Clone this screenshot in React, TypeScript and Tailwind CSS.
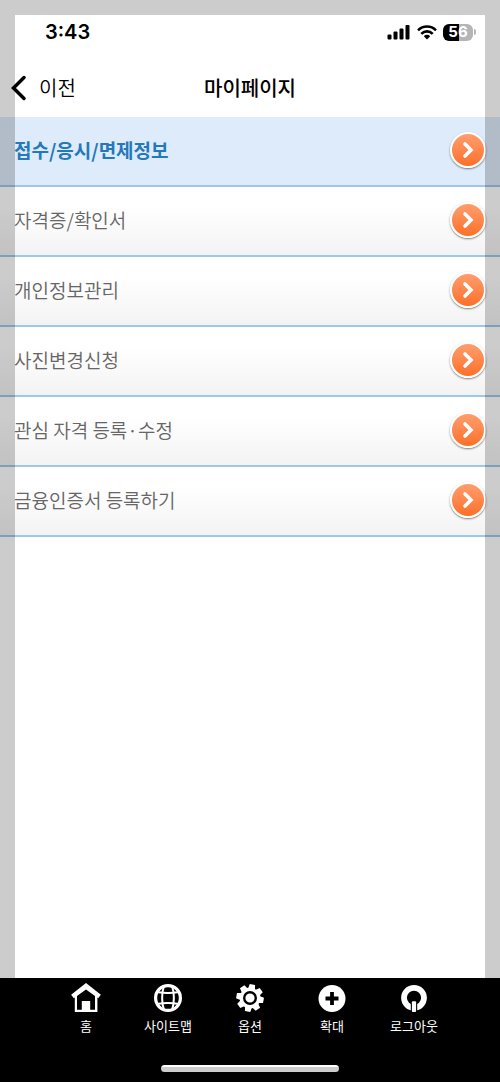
import { ReactNode } from "react";

const menuItems = [
  { label: "접수/응시/면제정보", active: true },
  { label: "자격증/확인서", active: false },
  { label: "개인정보관리", active: false },
  { label: "사진변경신청", active: false },
  { label: "관심 자격 등록·수정", active: false },
  { label: "금융인증서 등록하기", active: false },
];

const teeth = [0, 45, 90, 135, 180, 225, 270, 315];

const tabs: { label: string; icon: ReactNode }[] = [
  {
    label: "홈",
    icon: (
      <svg viewBox="0 0 30 30" className="size-[30px]" aria-hidden="true">
        <path d="M1.5 13.5 15 2.8 28.5 13.5" fill="none" stroke="white" strokeWidth="4.4" />
        <path d="M3.8 12v17h22.6V12L15 3.5Z" fill="white" />
        <path d="M6 13 15 6.4 24 13v13.7h-4.8V18h-8.4v8.7H6Z" fill="black" />
      </svg>
    ),
  },
  {
    label: "사이트맵",
    icon: (
      <svg viewBox="0 0 30 30" className="size-[30px]" fill="none" stroke="white" aria-hidden="true">
        <circle cx="15" cy="15" r="12.4" strokeWidth="3.2" />
        <path d="M11 3C8.500 10 8.500 20 11 27M19 3C21.500 10 21.500 20 19 27" strokeWidth="2" />
        <path d="M4 9q11 2 22 0M4 21q11-2 22 0" strokeWidth="2" />
      </svg>
    ),
  },
  {
    label: "옵션",
    icon: (
      <svg viewBox="0 0 30 30" className="size-[30px]" aria-hidden="true">
        <g fill="white" transform="rotate(10 15 15)">
          <circle cx="15" cy="15" r="10.4" />
          {teeth.map((angle) => (
            <path key={angle} d="M11.500 6 12.300 1.300h5.400L18.500 6Z" transform={`rotate(${angle} 15 15)`} />
          ))}
        </g>
        <circle cx="15" cy="15" r="5.8" fill="white" stroke="black" strokeWidth="2.4" />
      </svg>
    ),
  },
  {
    label: "확대",
    icon: (
      <svg viewBox="0 0 30 30" className="size-[30px]" aria-hidden="true">
        <circle cx="15" cy="15.5" r="13.5" fill="white" />
        <path d="M15 9v13M8.5 15.5h13" stroke="black" strokeWidth="3.8" />
      </svg>
    ),
  },
  {
    label: "로그아웃",
    icon: (
      <svg viewBox="0 0 30 30" className="size-[30px]" aria-hidden="true">
        <circle cx="15" cy="14.8" r="10" fill="none" stroke="white" strokeWidth="5.8" />
        <rect x="11.8" y="17.5" width="6.4" height="12" fill="black" />
        <rect x="12.9" y="18.3" width="4.2" height="10.6" rx="1" fill="white" />
      </svg>
    ),
  },
];

function StatusBar() {
  return (
    <div className="flex h-11 items-center justify-between pr-6 pl-[45px]">
      <span className="font-['Inter'] text-xl font-semibold">3:43</span>
      <div className="flex items-center gap-[6px]">
        <svg viewBox="0 0 24 16" className="h-4 w-6" aria-hidden="true">
          <rect x="0.5" y="10.5" width="4" height="5" rx="1" />
          <rect x="6.5" y="7.5" width="4" height="8" rx="1" />
          <rect x="12.5" y="4.5" width="4" height="11" rx="1" />
          <rect x="18.5" y="1" width="4" height="14.5" rx="1" />
        </svg>
        <svg viewBox="0 0 20 16" className="h-4 w-5" fill="none" stroke="black" strokeWidth="2.6" aria-hidden="true">
          <path d="M1 6.3a12.7 12.7 0 0 1 18 0" />
          <path d="M4.3 9.8a8 8 0 0 1 11.4 0" />
          <path d="M10 15.5 6.8 12.2a4.5 4.5 0 0 1 6.4 0Z" fill="black" stroke="none" />
        </svg>
        <div className="flex items-center gap-px">
          <span className="flex h-[17px] w-[30px] items-center justify-center rounded-md bg-linear-to-r from-black from-55% to-[#b5b5b5] to-55% font-['Inter'] text-[15px] font-bold text-white">
            56
          </span>
          <span className="h-[6px] w-[2px] rounded-r-full bg-[#b5b5b5]" />
        </div>
      </div>
    </div>
  );
}

function ArrowBadge() {
  return (
    <span className="flex size-9 items-center justify-center rounded-full border-2 border-white bg-linear-to-b from-[#ffa070] to-[#fc6c1c] bg-origin-border shadow-[0_1px_2px_0_rgba(0,0,0,0.5)]">
      <svg viewBox="0 0 12 18" className="h-[18px] w-3" fill="none" stroke="white" strokeWidth="3.6" strokeLinecap="round" aria-hidden="true">
        <path d="M3 3 9 9l-6 6" />
      </svg>
    </span>
  );
}

export default function App() {
  return (
    <div className="relative flex min-h-screen flex-col bg-white pt-[10px] font-['Noto_Sans_CJK_KR',sans-serif] text-black">
      <StatusBar />

      <header className="grid h-[63px] grid-cols-3 items-center px-2 pt-1">
        <button type="button" className="flex items-center gap-[9px] justify-self-start text-xl font-[350]">
          <svg viewBox="0 0 22 26" className="h-[26px] w-[22px]" fill="none" stroke="black" strokeWidth="3.5" strokeLinecap="round" aria-hidden="true">
            <path d="M16 2.5 5.5 13 16 23.5" />
          </svg>
          이전
        </button>
        <h1 className="text-center text-xl font-medium">마이페이지</h1>
      </header>

      <main className="flex-1">
        <ul>
          {menuItems.map((item) => (
            <li key={item.label}>
              <a
                href="#"
                className={`flex h-[70px] items-center justify-between border-b-2 border-[#9cc8ec] px-[14px] pb-[2px] text-[19px] ${
                  item.active
                    ? "bg-[#deebfa] font-bold text-[#2479ba]"
                    : "bg-linear-to-b from-white from-30% to-[#f3f3f3] font-[350] text-[#666666]"
                }`}
              >
                {item.label}
                <ArrowBadge />
              </a>
            </li>
          ))}
        </ul>
      </main>

      <footer className="flex h-[104px] flex-col items-center justify-between bg-black px-[45px] pt-[5px] pb-[10px] text-white">
        <nav className="grid w-full grid-cols-5">
          {tabs.map((tab) => (
            <a key={tab.label} href="#" className="flex flex-col items-center gap-1 text-[13px] leading-[18px]">
              {tab.icon}
              {tab.label}
            </a>
          ))}
        </nav>
        <span className="h-[7px] w-[178px] rounded-full bg-white" />
      </footer>

      {/* shaded frame over the page edges */}
      <div className="pointer-events-none absolute inset-0 border-[15px] border-black/20" />
    </div>
  );
}
